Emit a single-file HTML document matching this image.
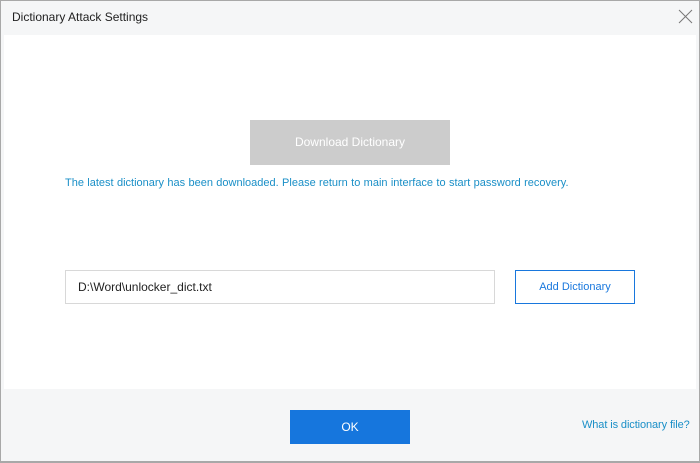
<!DOCTYPE html>
<html><head><meta charset="utf-8"><style>
*{margin:0;padding:0;box-sizing:border-box}
body{width:700px;height:463px;background:#f5f6f7;font-family:"Liberation Sans",sans-serif;font-size:12px;position:relative;overflow:hidden}
.frame{position:absolute;left:0;top:0;width:700px;height:463px;border:1px solid #a8a8a8;border-bottom:2px solid #a8a8a8}
.title{position:absolute;left:12px;top:10px;color:#222;font-size:12px}
.close{position:absolute;left:678px;top:9px}
.panel{position:absolute;left:4px;top:35px;width:692px;height:354px;background:#fff}
.dl{position:absolute;left:250px;top:120px;width:200px;height:45px;background:#cccccc;color:#fff;text-align:center;line-height:45px;font-size:12px}
.msg{position:absolute;left:65px;top:177px;color:#1a8fc7;font-size:11px;letter-spacing:0px;word-spacing:0.3px}
.inp{position:absolute;left:65px;top:270px;width:430px;height:34px;border:1px solid #d8d8d8;color:#222;padding-left:12px;line-height:32px;font-size:12px}
.add{position:absolute;left:515px;top:270px;width:120px;height:34px;border:1px solid #1877dd;color:#1877dd;text-align:center;line-height:32px;font-size:11px}
.ok{position:absolute;left:290px;top:410px;width:120px;height:34px;background:#1676dd;color:#fff;text-align:center;line-height:34px;font-size:12px}
.what{position:absolute;left:582px;top:419px;color:#1a8fc7;font-size:11px;letter-spacing:-0.1px}
</style></head><body>
<div class="frame"></div>
<div class="title">Dictionary Attack Settings</div>
<svg class="close" width="15" height="15" viewBox="0 0 15 15"><path d="M1 1L14 14M14 1L1 14" stroke="#777" stroke-width="1" fill="none"/></svg>
<div class="panel"></div>
<div class="dl">Download Dictionary</div>
<div class="msg">The latest dictionary has been downloaded. Please return to main interface to start password recovery.</div>
<div class="inp">D:\Word\unlocker_dict.txt</div>
<div class="add">Add Dictionary</div>
<div class="ok">OK</div>
<div class="what">What is dictionary file?</div>
</body></html>
